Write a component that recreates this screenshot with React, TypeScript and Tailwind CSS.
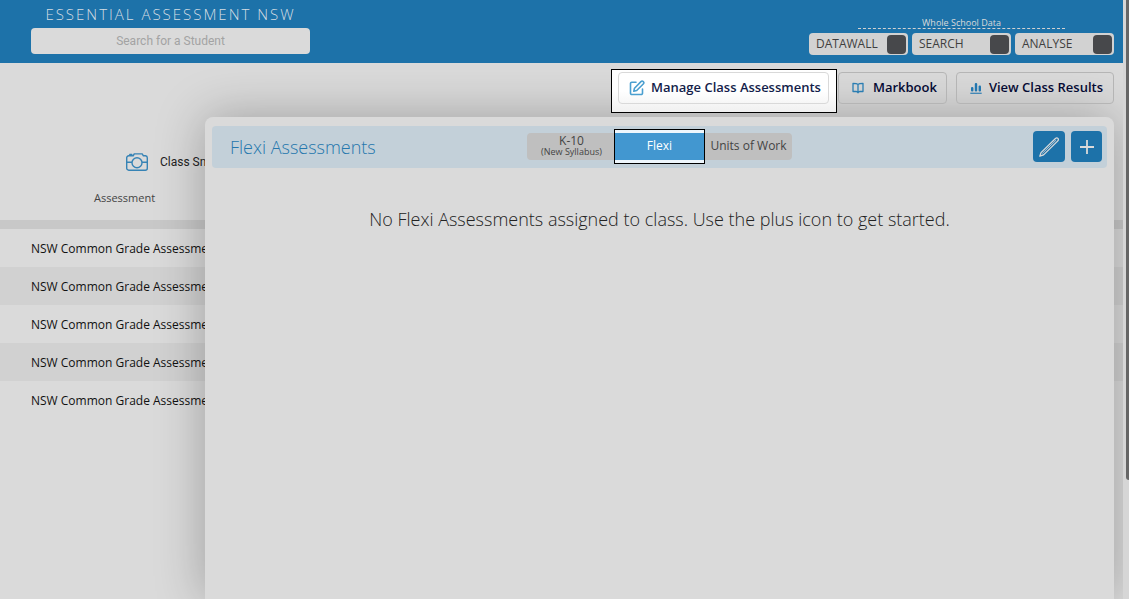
import React from 'react';

const openSans = "font-['Open_Sans',sans-serif]";

function EditIcon() {
  return (
    <svg viewBox="0 0 16 16" className="size-4 text-[#4a9fd0]" fill="none" stroke="currentColor" strokeWidth="1.6" strokeLinejoin="round" strokeLinecap="round" aria-hidden="true">
      <path d="M7 2.2H2.8A1.3 1.3 0 0 0 1.5 3.5v9.7a1.3 1.3 0 0 0 1.3 1.3h9.4a1.3 1.3 0 0 0 1.3-1.3V9" />
      <path d="M5.5 8.2 12.2 1.4a1.2 1.2 0 0 1 1.8 0l.5.5a1.2 1.2 0 0 1 0 1.8L7.7 10.5l-2.9.7z" />
    </svg>
  );
}

function BookIcon() {
  return (
    <svg viewBox="0 0 12 12" className="size-3 text-[#2a7db2]" fill="none" stroke="currentColor" strokeWidth="1.3" strokeLinejoin="round" aria-hidden="true">
      <path d="M6 2.4C5.2 1.6 4 1.3 1 1.3v8.2h3.2c.9 0 1.5.4 1.8 1.3.3-.9.9-1.3 1.8-1.3H11V1.3c-3 0-4.2.3-5 1.1zM6 2.4V11" />
    </svg>
  );
}

function BarsIcon() {
  return (
    <svg viewBox="0 0 12 12" className="size-3 text-[#2277b0]" fill="currentColor" aria-hidden="true">
      <rect x="1" y="5" width="2.4" height="4.6" rx="1" />
      <rect x="4.8" y="1" width="2.4" height="8.6" rx="1" />
      <rect x="8.6" y="3.6" width="2.4" height="6" rx="1" />
      <rect x="0.3" y="10.7" width="11.4" height="1.1" />
    </svg>
  );
}

function CameraIcon() {
  return (
    <svg viewBox="0 0 24 20" className="h-5 w-6 text-[#3683b5]" fill="none" stroke="currentColor" strokeWidth="1.4" strokeLinejoin="round" aria-hidden="true">
      <path d="M3.8 3.8H8.2L9.2 1.9h8l1.2 1.9h2.1A2 2 0 0 1 22.3 5.8v10.4a2 2 0 0 1-2 2H3.7a2 2 0 0 1-2-2V5.8a2 2 0 0 1 2-2z" />
      <circle cx="12" cy="10.8" r="5" />
      <path d="M1.7 10.3H7M17 10.3h5.3" />
      <path d="M4.8 3.4V2.4h2v1" />
    </svg>
  );
}

function PencilIcon() {
  return (
    <svg viewBox="0 0 22 22" className="size-[22px]" fill="none" stroke="currentColor" strokeWidth="1.3" strokeLinejoin="round" strokeLinecap="round" aria-hidden="true">
      <path d="M1.8 20.2 3 16.6 17.2 2.7c1.1-1 2.1-.9 2.7-.3.7.7.7 1.7-.3 2.7L5.6 18.9z" />
      <path d="M4.6 17.2 17.8 4.4" strokeWidth="0.8" />
    </svg>
  );
}

function PlusIcon() {
  return (
    <svg viewBox="0 0 14 14" className="size-3.5" stroke="currentColor" strokeWidth="1.8" aria-hidden="true">
      <path d="M7 0v14M0 7h14" />
    </svg>
  );
}

function DataButton({ label }: { label: string }) {
  return (
    <button type="button" className="flex h-[22px] w-[99px] items-center justify-between rounded bg-[#d2d2d2] pr-0.5 pl-[7px] text-xs text-[#3f3f3f]">
      {label}
      <span className="size-[19px] rounded bg-[#47484b]" />
    </button>
  );
}

function Toolbar() {
  const button = 'flex h-8 items-center rounded border text-[13px] font-semibold whitespace-nowrap';
  return (
    <div className="flex items-start justify-end pr-[9px]">
      <div className="mt-1.5 h-11 border border-black bg-linear-to-b from-white from-50% to-[#f0f0f0] pt-0.5 pr-[7px] pl-1.5">
        <button type="button" className={`${button} gap-1.5 border-[#d9d9d9] pr-[7px] pl-2.5 text-[#131d4a]`}>
          <EditIcon />
          Manage Class Assessments
        </button>
      </div>
      <button type="button" className={`${button} mt-[9px] ml-px gap-[9px] border-[#b5b5b5] pr-[9px] pl-[13px] text-[#050a33]`}>
        <BookIcon />
        Markbook
      </button>
      <button type="button" className={`${button} mt-[9px] ml-[9px] gap-[7px] border-[#b5b5b5] pr-[10px] pl-[13px] text-[#050a33]`}>
        <BarsIcon />
        View Class Results
      </button>
    </div>
  );
}

const assessments = [1, 2, 3, 4, 5];

function AssessmentPanel() {
  return (
    <section className="absolute top-0 right-[9px] bottom-0 left-[205px] rounded-t-lg bg-[#dadada] px-[7px] pt-[9px] shadow-[0_0_50px_rgba(0,0,0,0.28)]">
      <div className="grid h-[42px] grid-cols-[1fr_auto_1fr] items-start rounded bg-[#c3d0d9] px-[5px]">
        <h2 className="pl-[13px] text-lg leading-[42px] font-light text-[#2577ad]">Flexi Assessments</h2>
        <div className="mt-[7px] flex h-[27px] items-center rounded bg-[#bfbfbf] text-xs text-[#444]">
          <button type="button" className="flex w-[87px] flex-col items-center pb-[3px] pl-0.5 leading-3">
            K-10
            <span className="text-[9px] leading-[9px]">(New Syllabus)</span>
          </button>
          <div className="flex h-[35px] w-[91px] items-center border border-black bg-[#eef6fc]">
            <button type="button" aria-pressed="true" className="h-[27px] w-full bg-[#4297d0] pb-0.5 text-white">
              Flexi
            </button>
          </div>
          <button type="button" className="w-[87px] pb-0.5 whitespace-nowrap">Units of Work</button>
        </div>
        <div className="flex justify-end gap-1.5 pt-[5px] text-[#dadada]">
          <button type="button" aria-label="Edit" className="flex h-[31px] w-8 items-center justify-center rounded bg-[#1d72a9]">
            <PencilIcon />
          </button>
          <button type="button" aria-label="Add" className="flex size-[31px] items-center justify-center rounded bg-[#1d72a9]">
            <PlusIcon />
          </button>
        </div>
      </div>
      <p className="mt-[37px] text-center text-lg font-light text-[#222]">
        No Flexi Assessments assigned to class. Use the plus icon to get started.
      </p>
    </section>
  );
}

export default function App() {
  return (
    <div className={`${openSans} flex min-h-screen bg-[#dadada]`}>
      <div className="flex min-w-0 flex-1 flex-col overflow-hidden">
        <header className="relative z-10 flex h-[63px] justify-between bg-[#1d72a9] pr-[9px] pl-[31px]">
          <div className="w-[279px] pt-0.5">
            <h1 className="pb-0.5 text-center text-[15px] leading-6 font-light tracking-[2px] whitespace-nowrap text-[#d5dde3]">ESSENTIAL ASSESSMENT NSW</h1>
            <input
              type="text"
              aria-label="Search for a Student"
              placeholder="Search for a Student"
              className="block h-[26px] w-full rounded bg-[#dadada] text-center font-[Roboto,sans-serif] text-xs placeholder:text-[#a3a3a3]"
            />
          </div>
          <div className="flex flex-col items-center pt-[17px]">
            <div className="mb-1 w-[207px] border-b border-dashed border-[#d2d2d2] text-center text-[9px] leading-[11px] text-[#dadada]">Whole School Data</div>
            <div className="flex gap-1">
              <DataButton label="DATAWALL" />
              <DataButton label="SEARCH" />
              <DataButton label="ANALYSE" />
            </div>
          </div>
        </header>
        <div className="relative z-[1] -mb-[50px] h-[50px]">
          <Toolbar />
        </div>
        <main className="relative mt-[54px] flex-1">
          <div className="flex h-[66px] items-center gap-[11px] pt-[23px] pl-[125px]">
            <CameraIcon />
            <span className="font-[Roboto,sans-serif] text-xs text-[#222]">Class Snapshot</span>
          </div>
          <table className="w-full border-separate border-spacing-0 text-left text-xs text-[#111]">
            <thead>
              <tr>
                <th className="h-[46px] border-b-[9px] border-[#c8c8c8] pt-0 pb-1.5 pl-[94px] text-[11px] font-normal text-[#444]">Assessment</th>
              </tr>
            </thead>
            <tbody>
              {assessments.map((id) => (
                <tr key={id} className="h-[38px] even:bg-[#d1d1d1]">
                  <td className="pt-0.5 pl-[31px]">NSW Common Grade Assessment</td>
                </tr>
              ))}
            </tbody>
          </table>
          <AssessmentPanel />
        </main>
      </div>
      <div className="w-1.5 bg-[#d6d6d6] pl-[3px]">
        <div className="h-[480px] rounded-bl bg-[#666]" />
      </div>
    </div>
  );
}
